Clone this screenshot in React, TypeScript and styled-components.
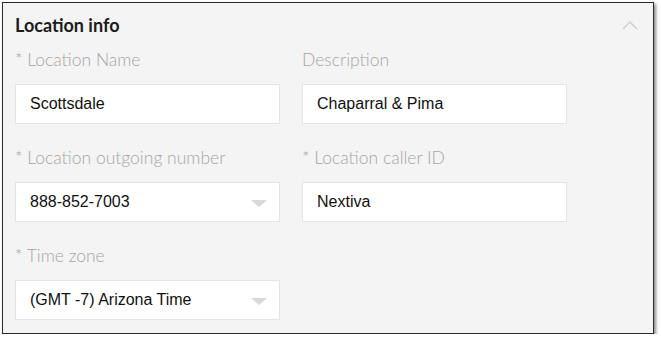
import styled, { createGlobalStyle } from "styled-components";

const GlobalStyle = createGlobalStyle`
  html, body {
    margin: 0;
    padding: 0;
    background: #ffffff;
  }
`;

const Page = styled.div`
  padding: 2px 0 0 2px;
`;

const Panel = styled.section`
  box-sizing: border-box;
  width: 652px;
  height: 332px;
  background: #f4f4f4;
  border: 1px solid #2b2b2b;
  box-shadow: 2px 2px 3px rgba(0, 0, 0, 0.45);
  padding: 0 12px;
`;

const Header = styled.div`
  display: flex;
  align-items: center;
  justify-content: space-between;
  height: 43px;
`;

const Title = styled.h2`
  margin: 0;
  font-family: Lato, "Open Sans", sans-serif;
  font-weight: 700;
  font-size: 18px;
  color: #1c1c1c;
`;

const Chevron = styled.svg`
  width: 16px;
  height: 10px;
  margin-right: 3px;
  margin-top: 1px;
`;

const Grid = styled.div`
  display: grid;
  grid-template-columns: 265px 265px;
  column-gap: 22px;
  row-gap: 20px;
`;

const Field = styled.div`
  display: flex;
  flex-direction: column;
`;

const Label = styled.label`
  font-family: Lato, "Open Sans", sans-serif;
  font-weight: 300;
  font-size: 17.5px;
  line-height: 20px;
  color: #a6a6a6;
  height: 34px;
  margin-top: 4px;
`;

const InputBox = styled.div`
  box-sizing: border-box;
  height: 40px;
  background: #ffffff;
  border: 1px solid #e4e4e4;
  display: flex;
  align-items: center;
  justify-content: space-between;
  padding: 0 12px 0 14px;
  font-family: "Liberation Sans", Arial, sans-serif;
  font-size: 16px;
  color: #111111;
`;

const Caret = styled.span`
  width: 0;
  height: 0;
  border-left: 8px solid transparent;
  border-right: 8px solid transparent;
  border-top: 7px solid #d8d8d8;
  margin-top: 2px;
`;

type FieldDef = { label: string; value: string; select?: boolean };

const fields: (FieldDef | null)[] = [
  { label: "* Location Name", value: "Scottsdale" },
  { label: "Description", value: "Chaparral & Pima" },
  { label: "* Location outgoing number", value: "888-852-7003", select: true },
  { label: "* Location caller ID", value: "Nextiva" },
  { label: "* Time zone", value: "(GMT -7) Arizona Time", select: true },
  null,
];

export default function App() {
  return (
    <>
      <GlobalStyle />
      <Page>
        <Panel>
          <Header>
            <Title>Location info</Title>
            <Chevron viewBox="0 0 16 10">
              <path d="M1 9 L8 2 L15 9" fill="none" stroke="#d0d0d0" strokeWidth="1.5" />
            </Chevron>
          </Header>
          <Grid>
            {fields.map((f, i) =>
              f ? (
                <Field key={i}>
                  <Label>{f.label}</Label>
                  <InputBox>
                    <span>{f.value}</span>
                    {f.select && <Caret />}
                  </InputBox>
                </Field>
              ) : (
                <div key={i} />
              )
            )}
          </Grid>
        </Panel>
      </Page>
    </>
  );
}
